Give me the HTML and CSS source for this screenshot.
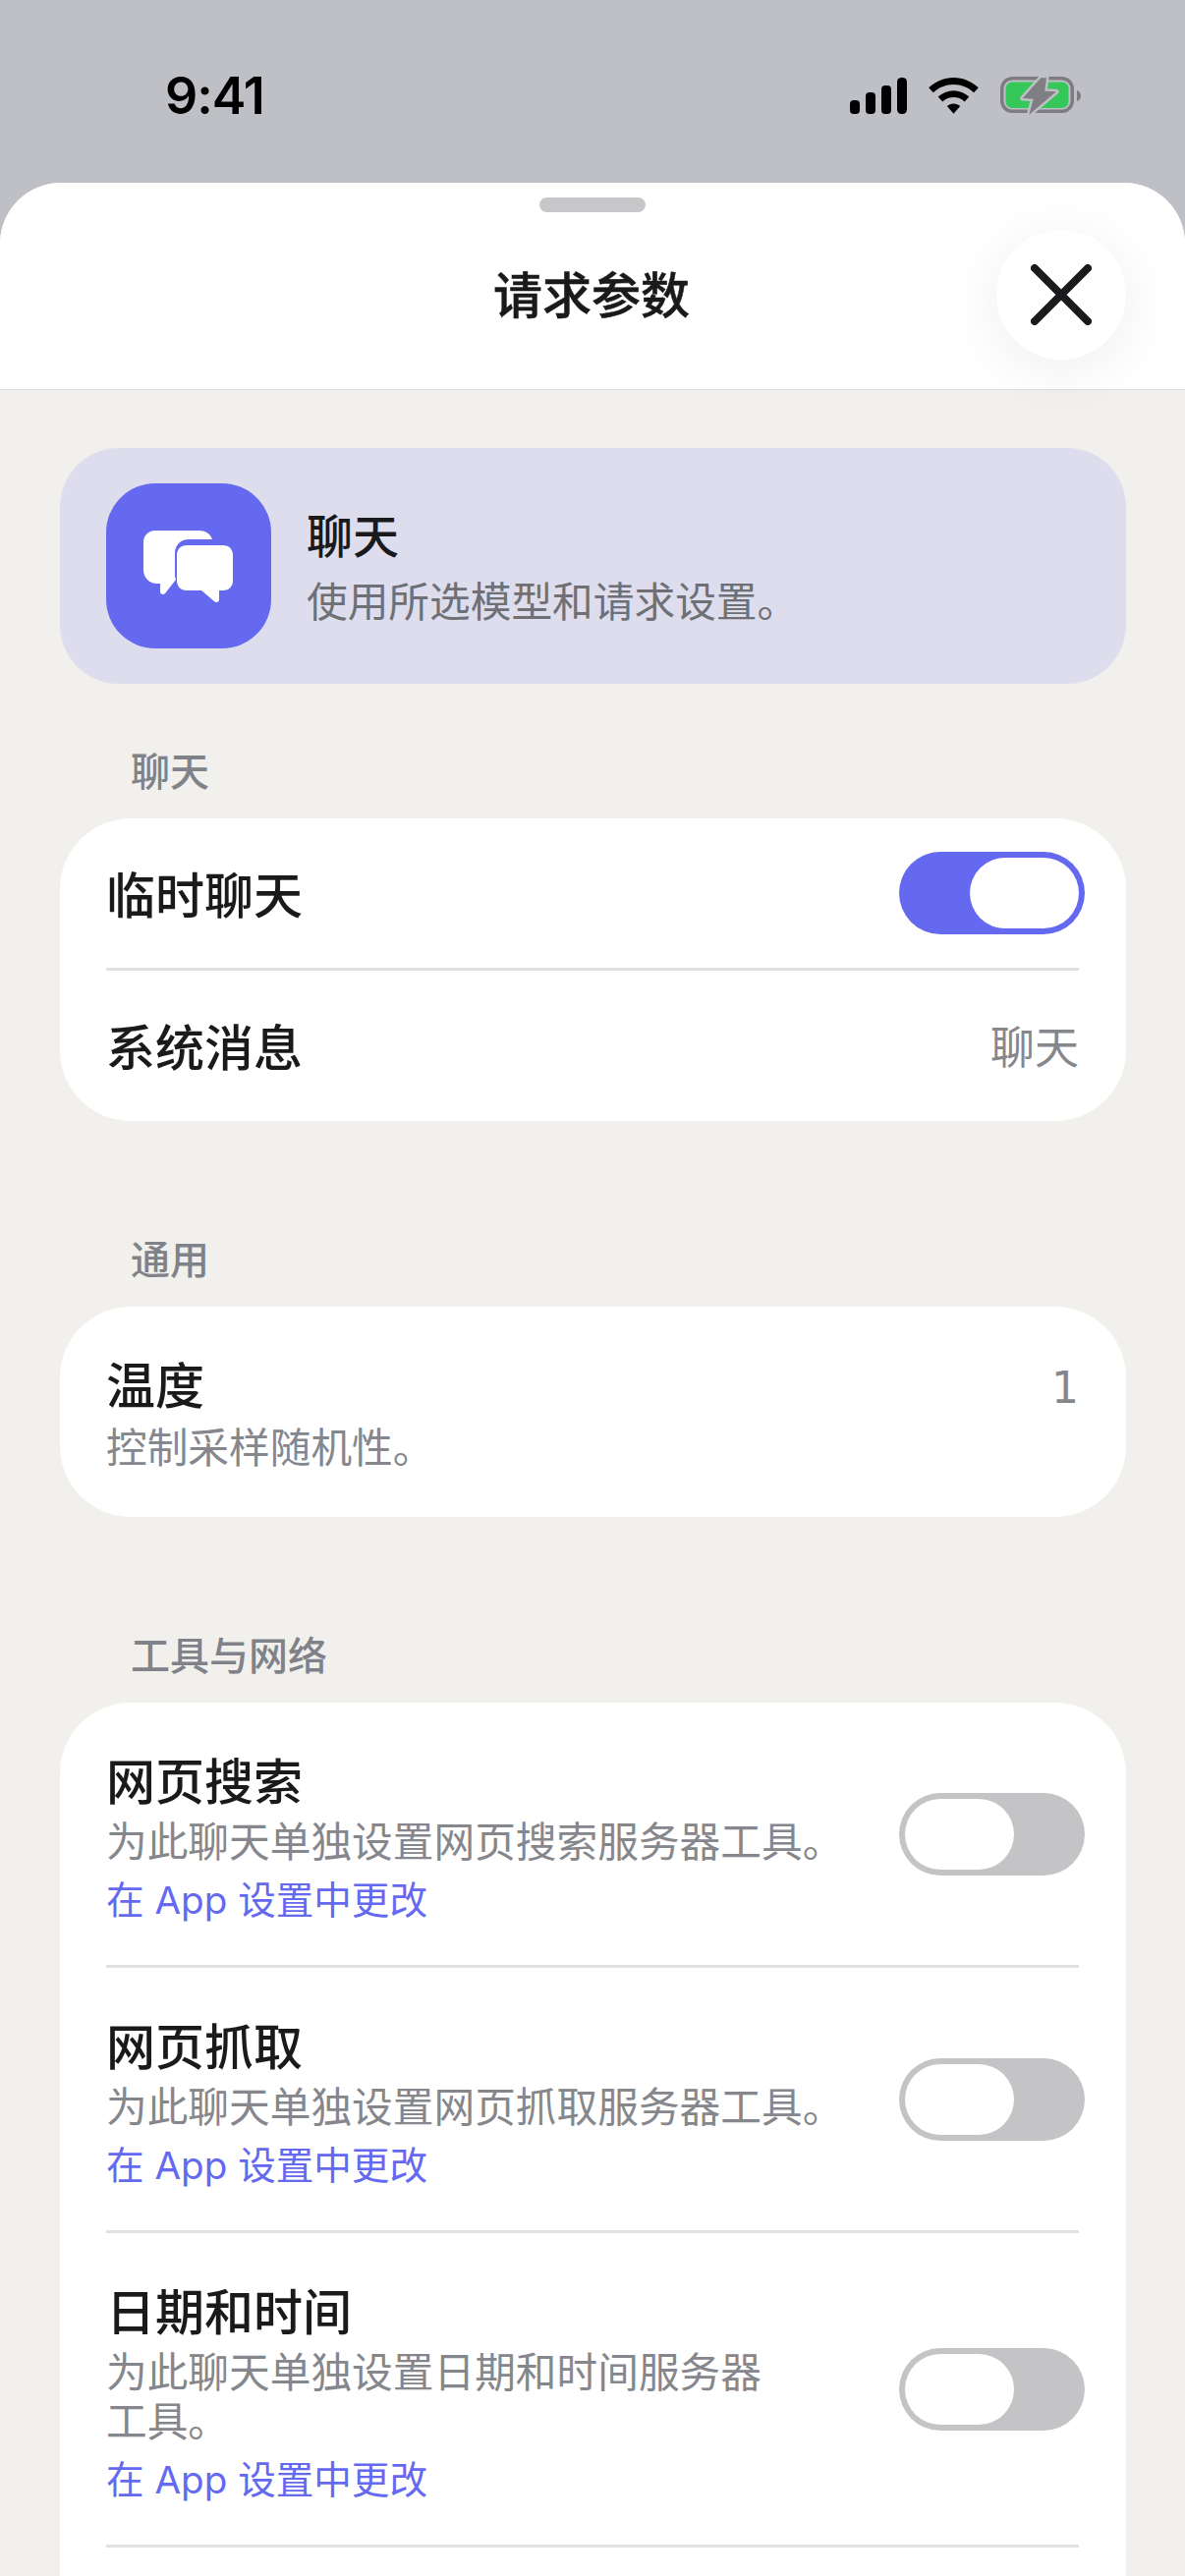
FILE: index.html
```html
<!DOCTYPE html>
<html lang="zh-CN">
<head>
<meta charset="utf-8">
<title>请求参数</title>
<link rel="stylesheet" href="styles.css">
</head>
<body>
<div class="status">
  <span class="time">9:41</span>
  <div class="status-icons">
    <svg class="signal" width="58" height="38" viewBox="0 0 58 38"><rect x="0" y="23" width="10" height="14" rx="4"/><rect x="16" y="15" width="10" height="22" rx="4"/><rect x="32" y="8" width="10" height="29" rx="4"/><rect x="48" y="0" width="10" height="37" rx="4.5"/></svg>
    <svg class="wifi" width="51" height="38" viewBox="0 0 51 38"><path d="M25.5 0C35 0 43.800 3.700 50.800 10.300L46.200 15.200C40.500 9.900 33.300 6.900 25.500 6.900S10.500 9.900 4.800 15.200L.2 10.300C7.200 3.700 16 0 25.500 0Z"/><path d="M25.500 13.200C31.500 13.200 37 15.500 41.300 19.500L36.700 24.400C33.600 21.600 29.700 20.100 25.500 20.100S17.400 21.600 14.300 24.400L9.700 19.500C14 15.500 19.500 13.200 25.500 13.200Z"/><path d="M25.500 26.500C27.900 26.500 30.300 27.400 32.200 29L25.500 36.800 18.800 29C20.700 27.400 23.100 26.500 25.500 26.500Z"/></svg>
    <svg class="battery" width="82" height="40" viewBox="0 0 82 40"><rect x="1.750" y="1.750" width="71.500" height="33.500" rx="10.500" fill="none" stroke="#7d7d81" stroke-width="3.500"/><rect x="5.500" y="5.500" width="64" height="26.500" rx="6.500" fill="#35c759"/><path d="M78 14c2.500.8 4 2.800 4 5.500s-1.500 4.700-4 5.500z" fill="#7d7d81"/><path d="M41.300 1.300 22.700 22l11 .7-4.400 16L57 15.300l-11.700-.6L47 1.300z" fill="#7f7f83" stroke="#bfc0c5" stroke-width="5" stroke-linejoin="round" paint-order="stroke"/></svg>
  </div>
</div>
<main class="sheet">
  <header class="sheet-header">
    <div class="grabber"></div>
    <h1 class="sheet-title">请求参数</h1>
    <button class="close" aria-label="关闭">
      <svg width="62" height="62" viewBox="0 0 62 62"><path d="M4 4 58 58M58 4 4 58" fill="none" stroke="#1a1a1c" stroke-width="8" stroke-linecap="round"/></svg>
    </button>
  </header>
  <div class="content">
    <section class="hero">
      <div class="hero-icon">
        <svg width="168" height="168" viewBox="0 0 168 168"><path d="M50 48h44c7 0 12 3 14 9H84c-8 0-14 6-14 14v22c0 2 .5 3.500 1 5L60 112c-2 2-5 1-5-2v-8h-3c-8 0-14-6-14-14V60c0-7 5-12 12-12Z" fill="#fff"/><path d="M82 63h37c6 0 10 4 10 10v26c0 6-4 10-10 10h-4v9c0 3-3 4-5 2l-13-11H82c-6 0-10-4-10-10V73c0-6 4-10 10-10Z" fill="#fff"/></svg>
      </div>
      <div class="hero-text">
        <div class="hero-title">聊天</div>
        <div class="sub">使用所选模型和请求设置。</div>
      </div>
    </section>

    <h2 class="label">聊天</h2>
    <section class="group">
      <div class="row row-simple row-first">
        <span class="title">临时聊天</span>
        <span class="toggle on"><span class="thumb"></span></span>
      </div>
      <div class="divider"></div>
      <div class="row row-simple">
        <span class="title">系统消息</span>
        <span class="value">聊天</span>
      </div>
    </section>

    <h2 class="label label-gap">通用</h2>
    <section class="group">
      <div class="row row-temp">
        <div class="text">
          <div class="title">温度</div>
          <div class="sub">控制采样随机性。</div>
        </div>
        <span class="value value-num">1</span>
      </div>
    </section>

    <h2 class="label label-gap">工具与网络</h2>
    <section class="group group-tools">
      <div class="row row-tool">
        <div class="text">
          <div class="title">网页搜索</div>
          <div class="sub">为此聊天单独设置网页搜索服务器工具。</div>
          <div class="link">在 App 设置中更改</div>
        </div>
        <span class="toggle"><span class="thumb"></span></span>
      </div>
      <div class="divider"></div>
      <div class="row row-tool">
        <div class="text">
          <div class="title">网页抓取</div>
          <div class="sub">为此聊天单独设置网页抓取服务器工具。</div>
          <div class="link">在 App 设置中更改</div>
        </div>
        <span class="toggle"><span class="thumb"></span></span>
      </div>
      <div class="divider"></div>
      <div class="row row-tool">
        <div class="text">
          <div class="title">日期和时间</div>
          <div class="sub">为此聊天单独设置日期和时间服务器<br>工具。</div>
          <div class="link">在 App 设置中更改</div>
        </div>
        <span class="toggle"><span class="thumb"></span></span>
      </div>
      <div class="divider"></div>
    </section>
  </div>
</main>
</body>
</html>
```
FILE: styles.css
```css
* { box-sizing: border-box; }
html, body { margin: 0; padding: 0; }
body {
  width: 1206px;
  height: 2622px;
  overflow: hidden;
  background: #bfc0c5;
  color: #1a1a1c;
  font-family: Inter, "Noto Sans CJK SC", sans-serif;
}
.status {
  height: 186px;
  display: flex;
  justify-content: space-between;
  align-items: flex-start;
  padding: 67px 106px 0 168px;
}
.time {
  font-size: 52px;
  line-height: 62px;
  letter-spacing: -1px;
  font-weight: 600;
  color: #000;
}
.status-icons {
  display: flex;
  align-items: flex-start;
  gap: 22px;
  padding-top: 12px;
}
.battery { margin-top: -1px; }
.sheet {
  height: 2436px;
  background: #f1f0ec;
  border-radius: 62px 62px 0 0;
  overflow: hidden;
}
.sheet-header {
  position: relative;
  height: 211px;
  background: #fff;
  border-bottom: 1px solid #dedede;
  display: flex;
  justify-content: center;
  padding: 84px 2px 0 0;
}
.grabber {
  position: absolute;
  top: 15px;
  left: 549px;
  width: 108px;
  height: 15px;
  border-radius: 8px;
  background: #c7c7c9;
}
.sheet-title {
  margin: 0;
  font-size: 50px;
  line-height: 62px;
  font-weight: 500;
  -webkit-text-stroke: 0.5px #1a1a1c;
}
.close {
  position: absolute;
  top: 48px;
  left: 1014px;
  width: 132px;
  height: 132px;
  border: 0;
  padding: 0;
  border-radius: 50%;
  background: #fff;
  box-shadow: 0 10px 60px rgba(0, 0, 0, 0.07);
  display: flex;
  align-items: center;
  justify-content: center;
  z-index: 2;
}
.content {
  padding: 59px 60px 0 61px;
}
.hero {
  height: 240px;
  border-radius: 60px;
  background: #dedded;
  display: flex;
  align-items: center;
  gap: 36px;
  padding-left: 47px;
}
.hero-icon {
  width: 168px;
  height: 168px;
  border-radius: 50px;
  background: #6469f0;
}
.hero-icon svg { display: block; }
.hero-title {
  font-size: 47px;
  line-height: 62px;
  font-weight: 500;
}
.hero-text .sub {
  margin-top: 11px;
  color: #6e7076;
}
.label {
  margin: 65px 0 22px;
  padding-left: 72px;
  font-size: 40px;
  line-height: 50px;
  font-weight: 500;
  color: #7f8288;
}
.label-gap { margin-top: 117px; }
.group {
  background: #fff;
  border-radius: 72px;
  padding: 0 48px 0 47px;
}
.group-tools { height: 1200px; }
.row {
  display: flex;
  align-items: center;
  justify-content: space-between;
}
.row-simple { height: 153px; }
.row-first { height: 152px; }
.row-simple .title,
.row-simple .value { padding-top: 5px; }
.row-temp {
  height: 214px;
  align-items: flex-start;
  padding-top: 50px;
}
.row-temp .sub { margin-top: 7px; }
.row-temp .value-num { padding-top: 2px; }
.row-tool { padding: 50px 0 37px; }
.row-tool .toggle { margin-bottom: 12px; }
.text { min-width: 0; }
.title {
  font-size: 50px;
  line-height: 62px;
  font-weight: 500;
}
.sub {
  margin-top: 5px;
  font-size: 41.700px;
  line-height: 50px;
  color: #85878d;
}
.link {
  margin-top: 5px;
  font-size: 38.600px;
  line-height: 58px;
  color: #6469f0;
}
.value {
  font-size: 45px;
  line-height: 62px;
  color: #85878d;
}
.value-num {
  font-family: "DejaVu Sans", sans-serif;
  font-size: 44px;
}
.divider {
  height: 3px;
  background: #e1e1e3;
}
.toggle {
  display: flex;
  flex: none;
  width: 189px;
  height: 84px;
  margin-right: -6px;
  padding: 6px;
  border-radius: 42px;
  background: #c4c4c6;
}
.toggle.on {
  background: #6469f0;
  justify-content: flex-end;
}
.thumb {
  width: 111px;
  height: 72px;
  border-radius: 36px;
  background: #fff;
}
```
